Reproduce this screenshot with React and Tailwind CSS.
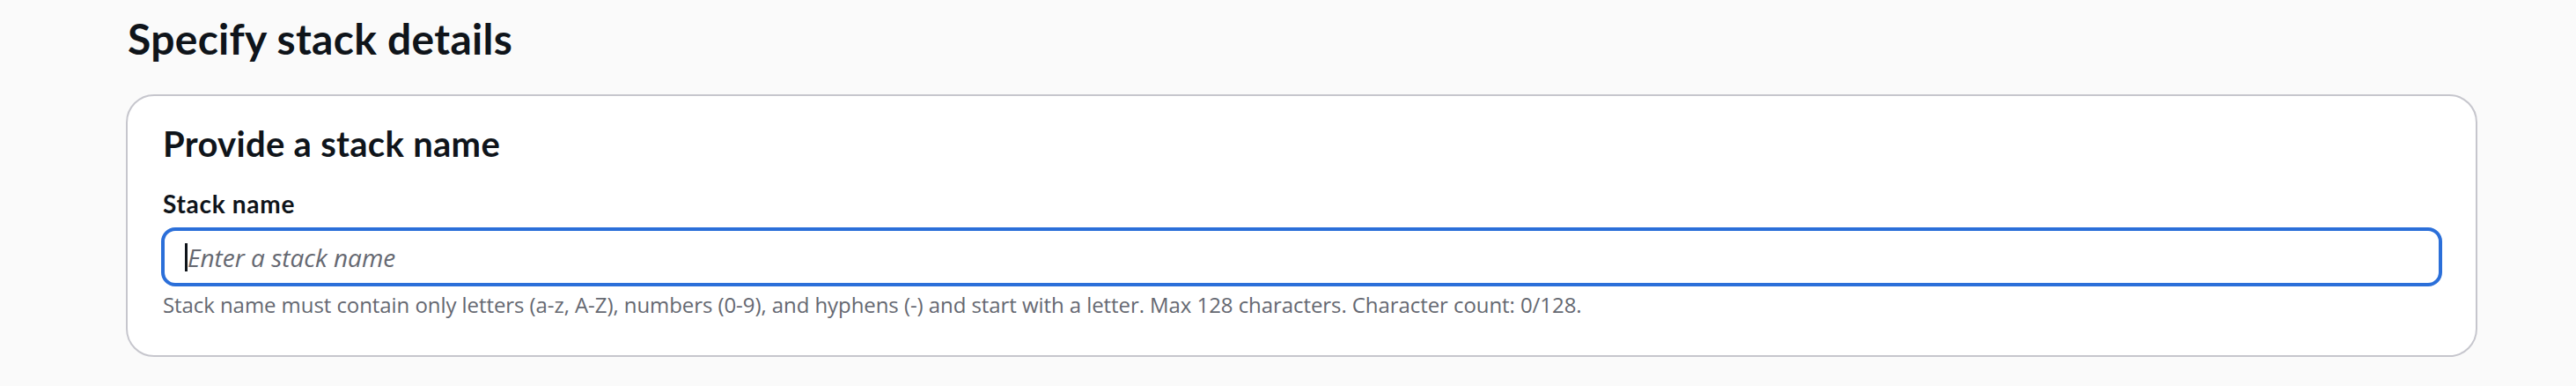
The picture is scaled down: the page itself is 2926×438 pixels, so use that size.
export default function App() {
  return (
    <div className="min-h-[438px] bg-[#fafafa] pl-[143px] pr-[112px] pt-[16px]">
      <h1 className="font-['Lato',sans-serif] text-[48px] leading-[56px] font-bold tracking-[0.3px] text-[#0f141a] pl-[2px]">
        Specify stack details
      </h1>

      <div className="mt-[35px] rounded-[32px] border-2 border-[#c6c6cd] bg-white px-[40px] pt-[30px] pb-[41px]">
        <h2 className="font-['Lato',sans-serif] text-[40px] leading-[48px] font-bold tracking-[0.3px] text-[#0f141a]">
          Provide a stack name
        </h2>

        <label className="mt-[24px] mb-[7px] block font-['Lato',sans-serif] text-[28px] leading-[40px] font-bold tracking-[0.7px] text-[#0f141a]">
          Stack name
        </label>

        <div className="-mx-[2px] flex h-[67px] items-center rounded-[16px] border-4 border-[#2b6fd9] bg-white pl-[23px]">
          <span className="h-[32px] w-[3px] bg-[#0f141a]" />
          <span className="font-['Open_Sans',sans-serif] text-[28px] italic text-[#656871]">
            Enter a stack name
          </span>
        </div>

        <p className="mt-[5px] font-['Open_Sans',sans-serif] text-[24px] leading-[32px] tracking-[-0.07px] text-[#656871]">
          Stack name must contain only letters (a-z, A-Z), numbers (0-9), and hyphens (-) and start with a letter. Max 128 characters. Character count: 0/128.
        </p>
      </div>
    </div>
  );
}
